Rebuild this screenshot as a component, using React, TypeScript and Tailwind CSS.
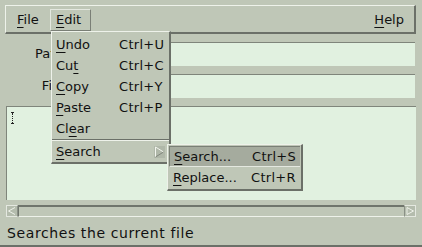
import React from 'react';

const raised = 'border-t border-l border-t-[#eef2ea] border-l-[#eef2ea] border-r-2 border-b-2 border-r-[#6b7068] border-b-[#6b7068]';

function Mn({ text, at }: { text: string; at: number }) {
  return (
    <>
      {text.slice(0, at)}
      <span className="underline underline-offset-[3px] decoration-1">{text[at]}</span>
      {text.slice(at + 1)}
    </>
  );
}

function Item({ label, at, keys }: { label: string; at: number; keys?: string }) {
  return (
    <div className="flex h-[21px] items-center pl-[4px]">
      <span className="w-[63px]"><Mn text={label} at={at} /></span>
      <span className="tracking-[0.3px]">{keys}</span>
    </div>
  );
}

export default function App() {
  return (
    <div
      className="relative w-[422px] h-[247px] bg-[#bfc7b7] text-[13px] text-[#111] overflow-hidden flex flex-col"
      style={{ fontFamily: '"DejaVu Sans", sans-serif' }}
    >
      {/* menu bar */}
      <div className="mx-[5px] mt-[5px] w-[411px] h-[29px] flex items-center pt-[2px] bg-[#bfc7b7] border-t border-l border-t-[#eef2ea] border-l-[#eef2ea] border-b-2 border-r-2 border-b-[#6b7068] border-r-[#6b7068]">
        <div className="pl-[11px] w-[44px]"><Mn text="File" at={0} /></div>
        <div className="h-[22px] w-[41px] flex items-center pl-[5px] border border-t-[#e4e8e0] border-l-[#e4e8e0] border-r-[#7a7f76] border-b-[#7a7f76]">
          <Mn text="Edit" at={0} />
        </div>
        <div className="ml-auto pr-[10px]"><Mn text="Help" at={0} /></div>
      </div>

      {/* fields */}
      <div className="mt-[8px] flex items-center h-[24px]">
        <span className="w-[70px] text-right pr-[2px]">Path:</span>
        <div className="ml-[5px] w-[340px] h-[24px] bg-[#e1f1e0] border-t border-t-[#7f857b]" />
      </div>
      <div className="mt-[8px] flex items-center h-[24px]">
        <span className="w-[70px] text-right pr-[2px]">File:</span>
        <div className="ml-[5px] w-[340px] h-[24px] bg-[#e1f1e0] border-t border-t-[#7f857b]" />
      </div>

      {/* text area */}
      <div className="mt-[8px] ml-[6px] w-[410px] h-[94px] bg-[#e1f1e0] border-t border-l border-t-[#7f857b] border-l-[#7f857b] pl-[4px] pt-[5px]">
        <div className="w-[3px] h-[12px] flex flex-col items-center">
          <div className="w-[3px] h-px bg-[#222]" />
          <div className="w-px h-[10px] border-l border-dotted border-[#222]" />
          <div className="w-[3px] h-px bg-[#222]" />
        </div>
      </div>

      {/* scrollbar */}
      <div className="mt-[5px] ml-[6px] w-[410px] h-[12px] flex">
        <div className="w-[12px] h-[12px] bg-[#b4bcad] border border-[#e4e8e0] border-r-[#8a9086] flex items-center justify-center">
          <svg width="8" height="8" viewBox="0 0 8 8"><path d="M7 0.5 L0.5 4 L7 7.5" fill="none" stroke="#eef2ea" /></svg>
        </div>
        <div className="flex-1 h-[12px] bg-[#bfc7b7] border-t-2 border-t-[#6f756c] border-b border-b-[#eef2ea] border-l border-l-[#6f756c]" />
        <div className="w-[12px] h-[12px] bg-[#b4bcad] border border-[#e4e8e0] border-l-[#8a9086] flex items-center justify-center">
          <svg width="8" height="8" viewBox="0 0 8 8"><path d="M1 0.5 L7.5 4 L1 7.5 Z" fill="none" stroke="#eef2ea" /></svg>
        </div>
      </div>

      {/* status */}
      <div className="flex-1 flex items-center pl-[7px] pt-[5px] text-[14px] tracking-[0.6px] border-b-2 border-b-[#6b7068]">
        Searches the current file
      </div>

      {/* edit dropdown */}
      <div className={`absolute left-[51px] top-[31px] w-[120px] bg-[#bfc7b7] ${raised} flex flex-col pt-[2px]`}>
        <Item label="Undo" at={0} keys="Ctrl+U" />
        <Item label="Cut" at={2} keys="Ctrl+C" />
        <Item label="Copy" at={0} keys="Ctrl+Y" />
        <Item label="Paste" at={0} keys="Ctrl+P" />
        <Item label="Clear" at={2} />
        <div className="h-[2px] border-t border-t-[#6b7068] border-b border-b-[#eef2ea]" />
        <div className="flex h-[21px] items-center pl-[4px]">
          <span className="flex-1"><Mn text="Search" at={0} /></span>
          <svg className="mr-[4px]" width="11" height="12" viewBox="0 0 11 12">
            <rect x="0" y="0" width="11" height="12" fill="#b0b8a9" />
            <path d="M1.5 1 L1.5 11 M1.5 1 L9.5 6" fill="none" stroke="#f2f5ee" />
            <path d="M1.5 11 L9.5 6" fill="none" stroke="#80867c" />
          </svg>
        </div>
      </div>

      {/* search submenu */}
      <div className={`absolute left-[167px] top-[144px] w-[136px] bg-[#bfc7b7] ${raised} flex flex-col p-[1px]`}>
        <div className="flex h-[21px] items-center pl-[4px] bg-[#a5ab9e] border-t border-l border-t-[#7a7f76] border-l-[#7a7f76] border-b border-b-[#e4e8e0]">
          <span className="w-[78px]"><Mn text="Search..." at={0} /></span>
          <span className="tracking-[0.3px]">Ctrl+S</span>
        </div>
        <div className="flex h-[21px] items-center pl-[4px]">
          <span className="w-[78px]"><Mn text="Replace..." at={0} /></span>
          <span className="tracking-[0.3px]">Ctrl+R</span>
        </div>
      </div>
    </div>
  );
}
